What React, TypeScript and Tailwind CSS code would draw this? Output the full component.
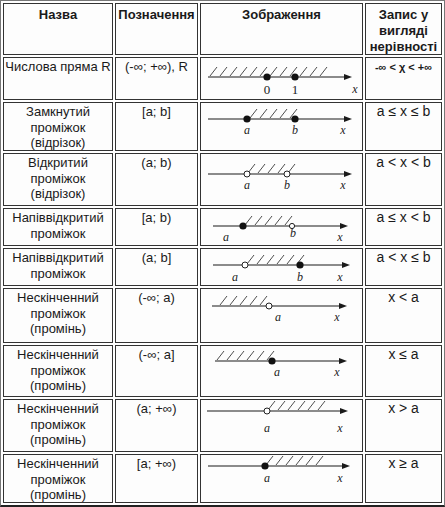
import React from "react";

type Dot = { x: number; filled: boolean; r?: number };
type Label = { x: number; y: number; t: string; italic?: boolean };
type Line = {
  y: number;
  x1: number;
  x2: number;
  hatch: [number, number];
  dots: Dot[];
  labels: Label[];
};

function NumberLine({ l, h }: { l: Line; h: number }) {
  const slashes: number[] = [];
  for (let x = l.hatch[0]; x <= l.hatch[1]; x += 10) slashes.push(x);
  return (
    <svg width={161} height={h} viewBox={`0 0 161 ${h}`} className="block">
      {slashes.map((x, i) => (
        <line key={i} x1={x} y1={l.y - 1} x2={x + 7} y2={l.y - 10} stroke="#3a3a3a" strokeWidth={0.9} />
      ))}
      <line x1={l.x1} y1={l.y} x2={l.x2 - 3} y2={l.y} stroke="#1a1a1a" strokeWidth={1.2} />
      <polygon points={`${l.x2},${l.y} ${l.x2 - 8},${l.y - 3} ${l.x2 - 8},${l.y + 3}`} fill="#1a1a1a" />
      {l.dots.map((d, i) =>
        d.filled ? (
          <circle key={i} cx={d.x} cy={l.y} r={d.r ?? 3.6} fill="#111" />
        ) : (
          <circle key={i} cx={d.x} cy={l.y} r={d.r ?? 3} fill="#fff" stroke="#222" strokeWidth={1} />
        )
      )}
      {l.labels.map((t, i) => (
        <text
          key={i}
          x={t.x}
          y={t.y}
          textAnchor="middle"
          fontFamily="'Liberation Serif', serif"
          fontStyle={t.italic === false ? "normal" : "italic"}
          fontSize={t.italic === false ? 13 : 12}
          fill="#222"
        >
          {t.t}
        </text>
      ))}
    </svg>
  );
}

type Row = {
  h: number;
  name: React.ReactNode;
  sym: string;
  ineq: React.ReactNode;
  line: Line;
};

const rows: Row[] = [
  {
    h: 43,
    name: <>Числова пряма R</>,
    sym: "(-∞; +∞), R",
    ineq: <span className="text-[11px] font-semibold">-∞ &lt; χ &lt; +∞</span>,
    line: {
      y: 19, x1: 7, x2: 151, hatch: [9, 126],
      dots: [{ x: 66, filled: true }, { x: 94, filled: true }],
      labels: [
        { x: 66, y: 36, t: "0", italic: false },
        { x: 94, y: 36, t: "1", italic: false },
        { x: 154, y: 35, t: "x" },
      ],
    },
  },
  {
    h: 49,
    name: <>Замкнутий<br />проміжок<br />(відрізок)</>,
    sym: "[a; b]",
    ineq: "a ≤ x ≤ b",
    line: {
      y: 16, x1: 7, x2: 151, hatch: [49, 97],
      dots: [{ x: 46, filled: true }, { x: 94, filled: true }],
      labels: [
        { x: 46, y: 31, t: "a" },
        { x: 94, y: 31, t: "b" },
        { x: 142, y: 31, t: "x" },
      ],
    },
  },
  {
    h: 53,
    name: <>Відкритий<br />проміжок<br />(відрізок)</>,
    sym: "(a; b)",
    ineq: "a < x < b",
    line: {
      y: 20, x1: 7, x2: 151, hatch: [47, 87],
      dots: [{ x: 46, filled: false }, { x: 86, filled: false }],
      labels: [
        { x: 46, y: 35, t: "a" },
        { x: 86, y: 35, t: "b" },
        { x: 142, y: 35, t: "x" },
      ],
    },
  },
  {
    h: 38,
    name: <>Напіввідкритий<br />проміжок</>,
    sym: "[a; b)",
    ineq: "a ≤ x < b",
    line: {
      y: 17, x1: 12, x2: 147, hatch: [44, 84],
      dots: [{ x: 42, filled: true }, { x: 91, filled: false, r: 2.6 }],
      labels: [
        { x: 25, y: 32, t: "a" },
        { x: 92, y: 28, t: "b" },
        { x: 139, y: 32, t: "x" },
      ],
    },
  },
  {
    h: 38,
    name: <>Напіввідкритий<br />проміжок</>,
    sym: "(a; b]",
    ineq: "a < x ≤ b",
    line: {
      y: 16, x1: 12, x2: 149, hatch: [46, 104],
      dots: [{ x: 44, filled: false }, { x: 99, filled: true }],
      labels: [
        { x: 34, y: 32, t: "a" },
        { x: 99, y: 32, t: "b" },
        { x: 139, y: 32, t: "x" },
      ],
    },
  },
  {
    h: 55,
    name: <>Нескінченний<br />проміжок<br />(промінь)</>,
    sym: "(-∞; a)",
    ineq: "x < a",
    line: {
      y: 17, x1: 11, x2: 146, hatch: [19, 59],
      dots: [{ x: 68, filled: false }],
      labels: [
        { x: 77, y: 32, t: "a" },
        { x: 136, y: 32, t: "x" },
      ],
    },
  },
  {
    h: 52,
    name: <>Нескінченний<br />проміжок<br />(промінь)</>,
    sym: "(-∞; a]",
    ineq: "x ≤ a",
    line: {
      y: 15, x1: 14, x2: 146, hatch: [16, 72],
      dots: [{ x: 71, filled: true }],
      labels: [
        { x: 76, y: 30, t: "a" },
        { x: 136, y: 30, t: "x" },
      ],
    },
  },
  {
    h: 53,
    name: <>Нескінченний<br />проміжок<br />(промінь)</>,
    sym: "(a; +∞)",
    ineq: "x > a",
    line: {
      y: 11, x1: 6, x2: 147, hatch: [67, 122],
      dots: [{ x: 66, filled: false }],
      labels: [
        { x: 66, y: 32, t: "a" },
        { x: 139, y: 32, t: "x" },
      ],
    },
  },
  {
    h: 49,
    name: <>Нескінченний<br />проміжок<br />(промінь)</>,
    sym: "[a; +∞)",
    ineq: "x ≥ a",
    line: {
      y: 11, x1: 7, x2: 149, hatch: [65, 118],
      dots: [{ x: 64, filled: true }],
      labels: [
        { x: 66, y: 27, t: "a" },
        { x: 139, y: 27, t: "x" },
      ],
    },
  },
];

const cell = "border border-[#333] bg-[#fdfdfd] text-center";

export default function App() {
  return (
    <div
      className="w-[445px] h-[507px] bg-white border border-b-2 border-[#777] border-b-[#222] p-[2px] text-[#1a1a1a] text-[13px]"
      style={{ fontFamily: "'Liberation Sans', Arial, sans-serif" }}
    >
      <div className="grid grid-cols-[110px_83px_163px_77px] gap-[2px]">
        <div className={`${cell} h-[52px] font-bold leading-[16px] pt-[3px]`}>Назва</div>
        <div className={`${cell} h-[52px] font-bold leading-[16px] pt-[3px]`}>Позначення</div>
        <div className={`${cell} h-[52px] font-bold leading-[16px] pt-[3px]`}>Зображення</div>
        <div className={`${cell} h-[52px] font-bold leading-[16px] pt-[3px]`}>
          Запис у<br />вигляді<br />нерівності
        </div>
        {rows.map((r, i) => (
          <React.Fragment key={i}>
            <div className={`${cell} leading-[15.5px] pt-[1px]`} style={{ height: r.h }}>
              {r.name}
            </div>
            <div className={`${cell} leading-[15.5px] pt-[1px]`} style={{ height: r.h }}>
              {r.sym}
            </div>
            <div className={`${cell}`} style={{ height: r.h }}>
              <NumberLine l={r.line} h={r.h - 2} />
            </div>
            <div className={`${cell} text-[14px] leading-[15.5px] pt-[1px]`} style={{ height: r.h }}>
              {r.ineq}
            </div>
          </React.Fragment>
        ))}
      </div>
    </div>
  );
}
